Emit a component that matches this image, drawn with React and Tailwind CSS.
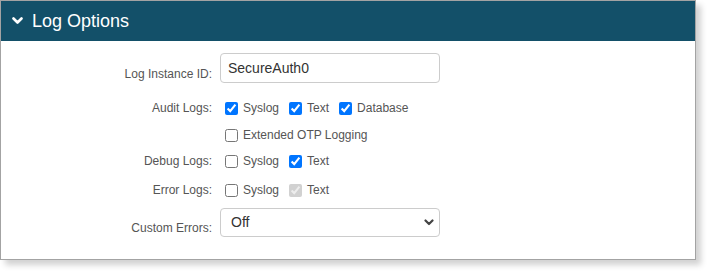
import React from "react";

function Check({ checked, disabled, label }) {
  return (
    <label className="flex items-center">
      <input
        type="checkbox"
        defaultChecked={checked}
        disabled={disabled}
        className="m-0 ml-[5px] w-[13px] h-[13px]"
      />
      <span className="ml-[5px] mr-[5px] text-[12px] text-[#555]">{label}</span>
    </label>
  );
}

function Row({ label, children, className = "", labelClass = "" }) {
  return (
    <div className={"flex " + className}>
      <div className={"w-[212px] shrink-0 pr-[1px] text-right text-[12px] text-[#555] " + labelClass}>
        {label}
      </div>
      <div className="flex-1 flex items-center pl-[7px]">{children}</div>
    </div>
  );
}

export default function App() {
  return (
    <div className="w-[711px] h-[275px] bg-white" style={{ fontFamily: '"Liberation Sans", Arial, sans-serif' }}>
      <div className="w-[696px] h-[260px] border border-[#a3a3a3] bg-white shadow-[5px_5px_6px_rgba(0,0,0,0.18)]">
        <div className="h-[40px] bg-[#135069] flex items-center pl-[11px]">
          <svg width="11" height="8" viewBox="0 0 11 8" className="mr-[9px]">
            <path d="M1.5 1.5 L5.5 5.5 L9.5 1.5" stroke="white" strokeWidth="2.6" fill="none" strokeLinecap="round" strokeLinejoin="round" />
          </svg>
          <span className="text-white text-[18px]">Log Options</span>
        </div>
        <div className="pt-[12px]">
          <Row label="Log Instance ID:" labelClass="pt-[12px]">
            <input
              type="text"
              defaultValue="SecureAuth0"
              className="w-[220px] h-[30px] border border-[#ccc] rounded-[4px] px-[7px] text-[14px] text-[#333] outline-none"
            />
          </Row>
          <Row label="Audit Logs:" className="mt-[16px] h-[18px] items-center">
            <Check checked label="Syslog" />
            <Check checked label="Text" />
            <Check checked label="Database" />
          </Row>
          <Row label="" className="mt-[9px] h-[18px] items-center">
            <Check label="Extended OTP Logging" />
          </Row>
          <Row label="Debug Logs:" className="mt-[8px] h-[18px] items-center">
            <Check label="Syslog" />
            <Check checked label="Text" />
          </Row>
          <Row label="Error Logs:" className="mt-[11px] h-[18px] items-center">
            <Check label="Syslog" />
            <Check checked disabled label="Text" />
          </Row>
          <Row label="Custom Errors:" className="mt-[8px]" labelClass="pt-[12px]">
            <div className="relative w-[220px] h-[29px]">
              <select className="appearance-none w-full h-full border border-[#ccc] rounded-[4px] pl-[10px] text-[14px] text-[#333] bg-white outline-none">
                <option>Off</option>
              </select>
              <svg width="10" height="7" viewBox="0 0 10 7" className="absolute right-[6px] top-[11px] pointer-events-none">
                <path d="M1.5 1.5 L5 5 L8.5 1.5" stroke="#444" strokeWidth="2.2" fill="none" strokeLinecap="round" strokeLinejoin="round" />
              </svg>
            </div>
          </Row>
        </div>
      </div>
    </div>
  );
}
